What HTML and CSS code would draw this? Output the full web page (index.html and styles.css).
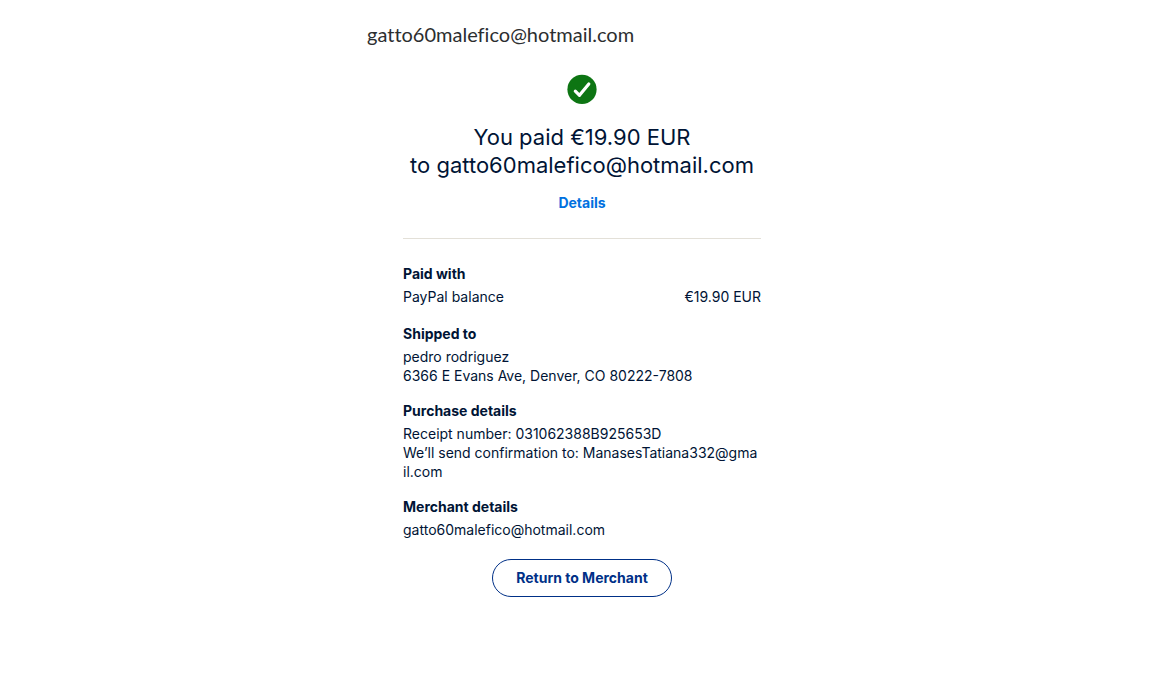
FILE: index.html
```html
<!DOCTYPE html>
<html lang="en">
<head>
<meta charset="utf-8">
<meta name="viewport" content="width=device-width, initial-scale=1">
<title>Payment complete</title>
<link rel="stylesheet" href="styles.css">
</head>
<body>
<div class="page">
  <header class="merchant">gatto60malefico@hotmail.com</header>
  <main class="receipt">
    <svg class="check" viewBox="0 0 30 30" aria-hidden="true">
      <circle cx="15" cy="15.4" r="14.6" fill="#0d7513"/>
      <path d="M8.3 17.1l4.2 4.2L21.8 10" fill="none" stroke="#fff" stroke-width="3.2" stroke-linecap="round" stroke-linejoin="round"/>
    </svg>
    <h1 class="title">You paid €19.90 EUR<br>to gatto60malefico@hotmail.com</h1>
    <a class="details" href="#receipt">Details</a>
    <div class="sections" id="receipt">
      <section class="section">
        <h2 class="heading">Paid with</h2>
        <p class="row"><span>PayPal balance</span><span>€19.90 EUR</span></p>
      </section>
      <section class="section">
        <h2 class="heading">Shipped to</h2>
        <p class="text">pedro rodriguez</p>
        <p class="text">6366 E Evans Ave, Denver, CO 80222-7808</p>
      </section>
      <section class="section">
        <h2 class="heading">Purchase details</h2>
        <p class="text">Receipt number: 031062388B925653D</p>
        <p class="text">We’ll send confirmation to: ManasesTatiana332@gma<wbr>il.com</p>
      </section>
      <section class="section">
        <h2 class="heading">Merchant details</h2>
        <p class="text">gatto60malefico@hotmail.com</p>
      </section>
    </div>
    <button class="return" type="button">Return to Merchant</button>
  </main>
</div>
</body>
</html>
```
FILE: styles.css
```css
* {
  box-sizing: border-box;
}

body {
  margin: 0;
  background: #fff;
  color: #001435;
  font-family: Inter, "Liberation Sans", sans-serif;
}

h1, h2, p {
  margin: 0;
}

.page {
  max-width: 430px;
  margin: 0 auto;
  padding-top: 23px;
}

.merchant {
  overflow: hidden;
  color: #2c2e2f;
  font-family: Lato, "Open Sans", sans-serif;
  font-size: 20px;
  font-variant-ligatures: none;
  line-height: 22px;
}

.receipt {
  display: flex;
  flex-direction: column;
  align-items: center;
  padding: 29px 36px 24px;
}

.check {
  width: 30px;
  height: 30px;
}

.title {
  margin-top: 19px;
  font-size: 22px;
  font-weight: 400;
  line-height: 28px;
  text-align: center;
}

.details {
  margin-top: 14px;
  color: #0070e0;
  font-size: 14px;
  font-weight: 700;
  line-height: 20px;
  text-decoration: none;
}

.sections {
  display: grid;
  gap: 16px;
  width: 100%;
  margin-top: 25px;
  padding-top: 25px;
  border-top: 1px solid #e3e0d8;
  font-size: 14px;
  line-height: 19px;
}

.heading {
  margin-bottom: 3px;
  font-size: 14px;
  font-weight: 700;
  line-height: 20px;
}

.row {
  display: flex;
  justify-content: space-between;
  padding-bottom: 2px;
}

.return {
  min-width: 180px;
  margin-top: 20px;
  padding: 8px 20px;
  border: 1px solid #003087;
  border-radius: 20px;
  background: #fff;
  color: #003087;
  font-family: inherit;
  font-size: 14px;
  font-weight: 700;
  line-height: 20px;
}
```
